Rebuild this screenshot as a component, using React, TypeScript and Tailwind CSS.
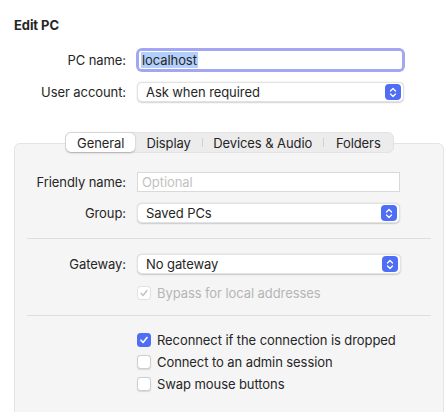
import React from 'react';

const Stepper: React.FC = () => (
  <div className="w-[16px] h-[16px] rounded-[4px] bg-[#4f6df5] flex items-center justify-center">
    <svg width="8" height="11" viewBox="0 0 8 11" fill="none">
      <path d="M1.5 4 L4 1.5 L6.5 4" stroke="white" strokeWidth="1.3" strokeLinecap="round" strokeLinejoin="round" />
      <path d="M1.5 7 L4 9.5 L6.5 7" stroke="white" strokeWidth="1.3" strokeLinecap="round" strokeLinejoin="round" />
    </svg>
  </div>
);

const Select: React.FC<{ value: string; w: string }> = ({ value, w }) => (
  <div
    className={`${w} h-[20px] bg-white rounded-[5px] border border-[#e2e2e2] shadow-[0_0.5px_1.5px_rgba(0,0,0,0.18)] flex items-center justify-between pl-[8px] pr-[2px]`}
  >
    <span>{value}</span>
    <Stepper />
  </div>
);

const Check: React.FC<{ checked?: boolean; disabled?: boolean; label: string }> = ({ checked, disabled, label }) => (
  <div className="flex items-center h-[16px] gap-[6px]">
    {checked && !disabled ? (
      <div className="w-[14px] h-[14px] rounded-[3.5px] bg-[#4f6df5] flex items-center justify-center">
        <svg width="10" height="10" viewBox="0 0 10 10" fill="none">
          <path d="M2 5.2 L4.1 7.5 L8 2.5" stroke="white" strokeWidth="1.6" strokeLinecap="round" strokeLinejoin="round" />
        </svg>
      </div>
    ) : (
      <div
        className={`w-[14px] h-[14px] rounded-[3.5px] bg-white border ${
          disabled ? 'border-[#e0e0e0]' : 'border-[#cdcdcd] shadow-[0_0.5px_1px_rgba(0,0,0,0.12)]'
        } flex items-center justify-center`}
      >
        {checked && (
          <svg width="10" height="10" viewBox="0 0 10 10" fill="none">
            <path d="M2 5.2 L4.1 7.5 L8 2.5" stroke="#c4c4c4" strokeWidth="1.5" strokeLinecap="round" strokeLinejoin="round" />
          </svg>
        )}
      </div>
    )}
    <span className={disabled ? 'text-[#b5b5b5]' : ''}>{label}</span>
  </div>
);

const tabs = ['General', 'Display', 'Devices & Audio', 'Folders'];
const tabWidths = ['w-[70px]', 'w-[67px]', 'w-[121px]', 'w-[70px]'];

export default function App() {
  return (
    <div className="w-[447px] h-[412px] bg-white overflow-hidden font-['Inter','Liberation_Sans',sans-serif] text-[13px] leading-[16px] tracking-[-0.08px] text-[#262626]">
      <div className="pl-[14px] pt-[17px] font-bold">Edit PC</div>

      {/* top fields */}
      <div className="mt-[15px] grid grid-cols-[126px_269px] gap-x-[10px] gap-y-[8px] items-center">
        <div className="text-right">PC name:</div>
        <div className="h-[24px] rounded-[6px] bg-[#a3a6f3] p-[3px]">
          <div className="h-full bg-white rounded-[2px] flex items-center pl-[2px]">
            <span className="bg-[#b3d0fc] px-[1px]">localhost</span>
          </div>
        </div>
        <div className="text-right">User account:</div>
        <div className="flex items-center h-[24px] pl-[1px]">
          <Select value="Ask when required" w="w-[267px]" />
        </div>
      </div>

      {/* segmented tabs */}
      <div className="mt-[28px] flex justify-center pl-[12px] relative z-10">
        <div className="h-[21px] w-[329px] rounded-[6px] bg-[#ececec] border border-[#e3e3e3] flex items-center">
          {tabs.map((t, i) => (
            <React.Fragment key={t}>
              {i > 1 && <div className="w-px h-[9px] bg-[#d0d0d0]" />}
              <div
                className={`${tabWidths[i]} h-full flex items-center justify-center ${
                  i === 0 ? 'bg-white rounded-[5px] shadow-[0_0.5px_2px_rgba(0,0,0,0.25)]' : ''
                }`}
              >
                {t}
              </div>
            </React.Fragment>
          ))}
        </div>
      </div>

      {/* tab panel */}
      <div className="ml-[14px] -mt-[10px] w-[430px] h-[300px] bg-[#f5f5f5] border border-[#e4e4e4] rounded-t-[6px] pt-[28px]">
        <div className="grid grid-cols-[111px_263px] gap-x-[11px] gap-y-[11px] items-center">
          <div className="text-right">Friendly name:</div>
          <div className="h-[20px] bg-white border border-[#d9d9d9] flex items-center pl-[4px] text-[#c2c2c2]">Optional</div>
          <div className="text-right">Group:</div>
          <Select value="Saved PCs" w="w-[263px]" />
        </div>

        <div className="mx-[12px] mt-[15px] h-px bg-[#dedede]" />

        <div className="mt-[15px] grid grid-cols-[111px_264px] gap-x-[11px] items-center">
          <div className="text-right">Gateway:</div>
          <Select value="No gateway" w="w-[264px]" />
        </div>
        <div className="mt-[11px] pl-[122px]">
          <Check checked disabled label="Bypass for local addresses" />
        </div>

        <div className="mx-[12px] mt-[14px] h-px bg-[#dedede]" />

        <div className="mt-[16px] pl-[122px] flex flex-col gap-[6px]">
          <Check checked label="Reconnect if the connection is dropped" />
          <Check label="Connect to an admin session" />
          <Check label="Swap mouse buttons" />
        </div>
      </div>
    </div>
  );
}
